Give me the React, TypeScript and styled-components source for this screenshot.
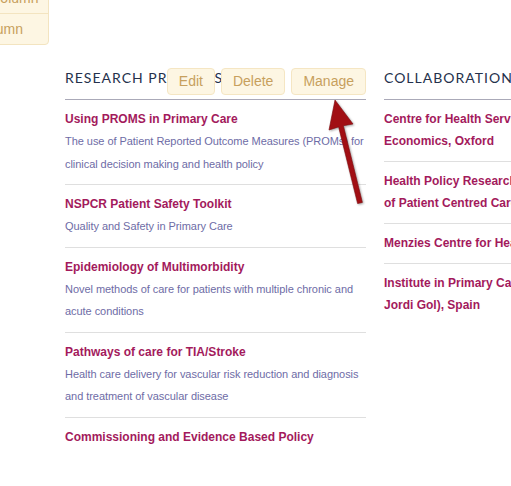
import React from "react";
import styled, { createGlobalStyle } from "styled-components";

const GlobalStyle = createGlobalStyle`
  html, body {
    margin: 0;
    padding: 0;
    overflow: hidden;
    background: #ffffff;
    font-family: "Liberation Sans", Arial, sans-serif;
  }
`;

const Page = styled.div`
  position: relative;
  display: flex;
  gap: 18px;
  padding: 68px 0 0 65px;
  width: 1000px;
  height: 486px;
  box-sizing: border-box;
`;

const Column = styled.section`
  flex: none;
  width: 301px;
`;

const ColumnHeader = styled.header`
  position: relative;
  display: flex;
  align-items: flex-start;
  height: 31px;
  border-bottom: 1px solid #aaa9b8;
`;

const HeaderTitle = styled.h2`
  margin: 1px 0 0;
  font-family: Lato, "Open Sans", sans-serif;
  font-weight: 400;
  font-size: 14px;
  line-height: 18px;
  letter-spacing: 1px;
  color: #25314c;
  white-space: nowrap;
`;

const Toolbar = styled.div`
  position: absolute;
  top: 0;
  right: 0;
  display: flex;
  gap: 6px;
`;

const ToolButton = styled.button`
  height: 27px;
  padding: 0 11px;
  border: 1px solid #f5e6c3;
  border-radius: 4px;
  background: #fdf6e3;
  color: #c7a05d;
  font-family: "Liberation Sans", Arial, sans-serif;
  font-size: 14px;
  line-height: 25px;
  cursor: pointer;
`;

const ItemList = styled.ul`
  list-style: none;
  margin: 0;
  padding: 0;
`;

const Item = styled.li<{ $last?: boolean }>`
  padding: 8px 0 9px;
  border-bottom: ${(p) => (p.$last ? "none" : "1px solid #dfdfdf")};
`;

const ItemTitle = styled.a`
  display: block;
  font-size: 12px;
  font-weight: 700;
  line-height: 22px;
  color: #a31a5c;
  text-decoration: none;
  white-space: nowrap;
`;

const ItemDesc = styled.p`
  margin: 0 -8px 0 0;
  font-size: 11px;
  line-height: 22.5px;
  letter-spacing: -0.05px;
  color: #6e6ca6;
`;

const Menu = styled.ul`
  position: absolute;
  top: -18px;
  left: -70px;
  width: 119px;
  box-sizing: border-box;
  margin: 0;
  padding: 0;
  list-style: none;
  background: #fdf6e3;
  border: 1px solid #f3e4c0;
  border-radius: 0 0 4px 0;
`;

const MenuItem = styled.li<{ $divider?: boolean }>`
  height: 30px;
  padding-left: 18px;
  font-size: 14px;
  line-height: 30px;
  color: #c7a05d;
  white-space: nowrap;
  border-bottom: ${(p) => (p.$divider ? "1px solid #f3e4c0" : "none")};
`;

const ArrowLayer = styled.svg`
  position: absolute;
  top: 0;
  left: 0;
  pointer-events: none;
  filter: drop-shadow(1px 1px 1px rgba(0, 0, 0, 0.35));
`;

const projects = [
  {
    title: "Using PROMS in Primary Care",
    desc: "The use of Patient Reported Outcome Measures (PROMs) for clinical decision making and health policy",
  },
  { title: "NSPCR Patient Safety Toolkit", desc: "Quality and Safety in Primary Care" },
  {
    title: "Epidemiology of Multimorbidity",
    desc: "Novel methods of care for patients with multiple chronic and acute conditions",
  },
  {
    title: "Pathways of care for TIA/Stroke",
    desc: "Health care delivery for vascular risk reduction and diagnosis and treatment of vascular disease",
  },
  { title: "Commissioning and Evidence Based Policy", desc: "" },
];

const collaborations: string[][] = [
  ["Centre for Health Services Research and Health", "Economics, Oxford"],
  ["Health Policy Research Unit for the Evaluation", "of Patient Centred Care"],
  ["Menzies Centre for Health Policy, Sydney"],
  ["Institute in Primary Care Research (IDIAP", "Jordi Gol), Spain"],
];

export default function App() {
  return (
    <>
      <GlobalStyle />
      <Page>
        <Menu>
          <MenuItem $divider>Delete column</MenuItem>
          <MenuItem>Add column</MenuItem>
        </Menu>

        <Column>
          <ColumnHeader>
            <HeaderTitle>RESEARCH PROJECTS</HeaderTitle>
            <Toolbar>
              <ToolButton>Edit</ToolButton>
              <ToolButton>Delete</ToolButton>
              <ToolButton>Manage</ToolButton>
            </Toolbar>
          </ColumnHeader>
          <ItemList>
            {projects.map((p, i) => (
              <Item key={p.title} $last={i === projects.length - 1}>
                <ItemTitle href="#">{p.title}</ItemTitle>
                {p.desc && <ItemDesc>{p.desc}</ItemDesc>}
              </Item>
            ))}
          </ItemList>
        </Column>

        <Column>
          <ColumnHeader>
            <HeaderTitle>COLLABORATIONS</HeaderTitle>
          </ColumnHeader>
          <ItemList>
            {collaborations.map((lines, i) => (
              <Item key={i} $last={i === collaborations.length - 1}>
                <ItemTitle href="#">
                  {lines.map((l, j) => (
                    <React.Fragment key={j}>
                      {j > 0 && <br />}
                      {l}
                    </React.Fragment>
                  ))}
                </ItemTitle>
              </Item>
            ))}
          </ItemList>
        </Column>

        <ArrowLayer width="511" height="486" viewBox="0 0 511 486">
          <polygon
            points="335,100 353,124 343.4,125.7 362.4,202.4 357.6,203.6 338.6,126.9 329,130"
            fill="#a10f14"
            stroke="#7d0a0e"
            strokeWidth="0.6"
            strokeLinejoin="round"
          />
        </ArrowLayer>
      </Page>
    </>
  );
}
